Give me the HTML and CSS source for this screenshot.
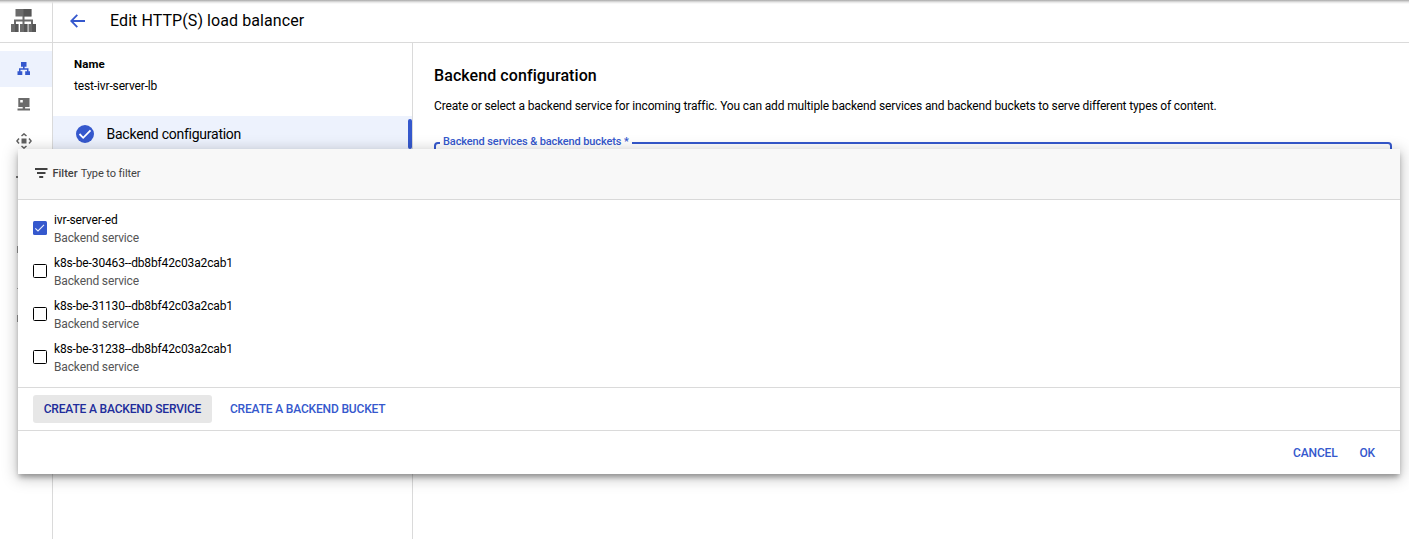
FILE: index.html
```html
<!DOCTYPE html>
<html lang="en">
<head>
<meta charset="utf-8">
<title>Edit HTTP(S) load balancer</title>
<link rel="stylesheet" href="styles.css">
</head>
<body>
<div class="app">
  <nav class="rail">
    <div class="rail-logo">
      <svg width="26" height="24" viewBox="0 0 26 24"><g fill="#6b6b6b"><path d="M4.500 0h16v7.500h-16zM0 15h7.500v8H0zM9 15h7.500v8H9zM17.500 15H25v8h-7.500z"/><path d="M11.500 7h2v8h-2zM3 10.500h19V15h-2v-2.500H5V15H3z"/></g><path fill="#424242" d="M12.500 0h8v7.500h-8zM4 15h3.500v8H4zM13 15h3.500v8H13zM21 15h4v8h-4z" opacity=".5"/></svg>
    </div>
    <div class="rail-item active">
      <svg width="14" height="14" viewBox="0 0 14 14"><path fill="#3558cd" d="M4 0h5.500v4.700H7.600v1.500h3.900v3.100H13V13H8.200V9.300H10V7.700H3.500v1.600h1.800V13H.5V9.300H2V6.200h4V4.700H4z"/></svg>
    </div>
    <div class="rail-item">
      <svg width="14" height="14" viewBox="0 0 14 14"><path fill="#6b6b6b" fill-rule="evenodd" d="M1.300 0h11.200v9H1.300zM3.200 1.900v2.600h2.600V1.900zM5.700 9h2.400v1.500H13v1.900H.5v-1.900h5.200z"/></svg>
    </div>
    <div class="rail-item">
      <svg width="16" height="16" viewBox="0 0 16 16"><path fill="#616161" d="M5.500 5.500h5v5h-5z"/><path fill="none" stroke="#616161" stroke-width="1.500" d="M5.500 3 8 .9 10.500 3M5.500 13 8 15.100l2.500-2.100M3 5.500.9 8 3 10.500M13 5.500 15.100 8 13 10.500"/></svg>
    </div>
    <div class="rail-rest"><i class="mark mark-a"></i><i class="mark mark-b"></i><i class="mark mark-c"></i><i class="mark mark-b mark-d"></i></div>
  </nav>
  <div class="main">
    <header class="topbar">
      <svg width="16" height="14" viewBox="0 0 16 14"><path fill="none" stroke="#3558cd" stroke-width="1.800" d="M7.300.8 1.200 7l6.100 6.200M1.200 7H15"/></svg>
      <h1 class="page-title">Edit HTTP(S) load balancer</h1>
    </header>
    <div class="columns">
      <aside class="steps">
        <div class="name-label">Name</div>
        <div class="name-value">test-ivr-server-lb</div>
        <div class="step">
          <svg width="18" height="18" viewBox="0 0 18 18"><circle cx="9" cy="9" r="9" fill="#3558cd"/><path fill="none" stroke="#fff" stroke-width="1.800" d="m3.500 9 3.700 3.800 7.300-7.400"/></svg>
          <span class="step-text">Backend configuration</span>
          <i class="step-bar"></i>
        </div>
      </aside>
      <section class="content">
        <h2 class="section-title">Backend configuration</h2>
        <p class="section-text">Create or select a backend service for incoming traffic. You can add multiple backend services and backend buckets to serve different types of content.</p>
        <fieldset class="field"><legend class="field-label">Backend services &amp; backend buckets *</legend></fieldset>
      </section>
    </div>
  </div>
</div>
<div class="top-shade"></div>
<div class="dialog">
  <div class="filter">
    <svg width="13" height="10" viewBox="0 0 13 10"><path fill="#424242" d="M0 0h12.500v1.900H0zM2 4h8.500v1.900H2zM4.200 8h4v1.900h-4z"/></svg>
    <span class="filter-label">Filter</span><span class="filter-hint">Type to filter</span>
  </div>
  <div class="options">
    <div class="option"><span class="box checked"><svg width="14" height="14" viewBox="0 0 14 14"><path fill="none" stroke="#e8edfa" stroke-width="1.100" d="m2.300 7.300 2.700 2.700 6-6.200"/></svg></span><div><div class="option-name">ivr-server-ed</div><div class="option-kind">Backend service</div></div></div>
    <div class="option"><span class="box"></span><div><div class="option-name">k8s-be-30463--db8bf42c03a2cab1</div><div class="option-kind">Backend service</div></div></div>
    <div class="option"><span class="box"></span><div><div class="option-name">k8s-be-31130--db8bf42c03a2cab1</div><div class="option-kind">Backend service</div></div></div>
    <div class="option"><span class="box box-last"></span><div><div class="option-name">k8s-be-31238--db8bf42c03a2cab1</div><div class="option-kind">Backend service</div></div></div>
  </div>
  <div class="create-row">
    <button class="btn btn-focus">CREATE A BACKEND SERVICE</button>
    <button class="btn">CREATE A BACKEND BUCKET</button>
  </div>
  <div class="actions"><button class="btn">CANCEL</button><button class="btn">OK</button></div>
</div>
</body>
</html>
```
FILE: styles.css
```css
* { box-sizing: border-box; }
body { margin: 0; background: #fff; color: #000; font-family: Roboto, "Liberation Sans", sans-serif; font-size: 12px; letter-spacing: -.14px; overflow: hidden; }
svg { display: block; flex: none; }
.app { display: flex; width: 1409px; height: 539px; }
.rail { width: 53px; border-right: 1px solid #dadada; flex: none; }
.rail-logo { height: 43px; border-bottom: 1px solid #dadada; padding: 9px 0 0 11px; margin-bottom: 8px; }
.rail-item { height: 36px; display: flex; align-items: center; justify-content: center; padding-right: 5px; }
.active { background: #edf2fd; }
.rail-rest { padding-left: 16px; }
.mark { display: block; width: 2px; height: 1px; background: #777; }
.mark-a { margin-top: 17px; height: 2px; }
.mark-b { margin: 68px 0 0 1px; width: 1px; height: 7px; background: #999; }
.mark-c { margin: 35px 0 0 1px; width: 1px; background: #aaa; }
.mark-d { margin-top: 26px; }
.main { flex: 1; min-width: 0; display: flex; flex-direction: column; }
.topbar { height: 43px; flex: none; border-bottom: 1px solid #dadada; display: flex; align-items: center; padding: 0 0 1px 17px; }
.page-title { margin: 0 0 0 24px; font-size: 16px; font-weight: 400; line-height: 20px; letter-spacing: .08px; }
.columns { flex: 1; display: flex; }
.steps { width: 360px; flex: none; border-right: 1px solid #dadada; padding-top: 13px; }
.name-label { font-weight: 700; font-size: 11.500px; line-height: 16px; padding-left: 21px; letter-spacing: .1px; }
.name-value { font-size: 12px; line-height: 16px; padding-left: 21px; margin-top: 6px; }
.step { margin-top: 22px; height: 36px; background: #edf2fd; display: flex; align-items: center; padding-left: 23px; }
.step-text { font-size: 14px; margin-left: 12.500px; line-height: 20px; letter-spacing: -.25px; }
.step-bar { width: 4px; height: 30px; margin-left: auto; background: #3558cd; border-radius: 2px; }
.content { padding: 22px 17px 0 21px; flex: 1; }
.section-title { margin: 0; font-size: 16px; line-height: 22px; font-weight: 500; letter-spacing: .08px; }
.section-text { margin: 11px 0 0; font-size: 12px; line-height: 16px; white-space: nowrap; }
.field { margin: 20px 0 0; height: 50px; border: 2px solid #3558cd; border-radius: 4px; padding: 0 0 0 4px; }
.field-label { font-size: 11px; line-height: 16px; font-weight: 500; color: #3558cd; padding: 0 3px 1px; letter-spacing: -.11px; }
.top-shade { position: absolute; top: 0; left: 0; width: 100%; height: 4px; background: linear-gradient(#a8a8a8, #e3e3e3 50%, #fff0); }
.dialog { position: absolute; left: 18px; top: 149px; width: 1382px; height: 325px; background: #fff; box-shadow: 0 4px 5px -1px rgba(0,0,0,.3), 0 3px 14px 1px rgba(0,0,0,.25); }
.filter { height: 51px; background: #f8f8f8; border-bottom: 1px solid #d9d9d9; display: flex; align-items: center; padding: 0 0 2px 17px; font-size: 11px; color: #424242; letter-spacing: -.08px; }
.filter-label { font-weight: 500; margin-left: 4.500px; letter-spacing: 0; }
.filter-hint { margin-left: 3px; }
.options { height: 187px; padding-top: 7px; }
.option { height: 43px; display: flex; align-items: center; padding-left: 15px; }
.box { width: 14px; height: 14px; border: 1.500px solid #000; border-radius: 1.500px; margin: 0 7px 2px 0; }
.box-last { margin-bottom: 1px; }
.checked { border: 0; background: #3558cd; }
.option-name { line-height: 18px; }
.option-kind { line-height: 18px; color: #555; }
.create-row { height: 44px; border-top: 1px solid #dadada; border-bottom: 1px solid #dadada; display: flex; align-items: center; padding-left: 15px; gap: 8px; }
.btn { border: 0; background: none; font: 500 12px/16px Roboto, sans-serif; color: #3558cd; padding: 0 10px; height: 28px; border-radius: 3px; white-space: nowrap; letter-spacing: -.17px; }
.btn-focus { background: #e7e7e7; color: #202c9b; padding: 0 10.700px; }
.actions { height: 43px; display: flex; justify-content: flex-end; align-items: center; padding-right: 15px; gap: 2px; }
```
